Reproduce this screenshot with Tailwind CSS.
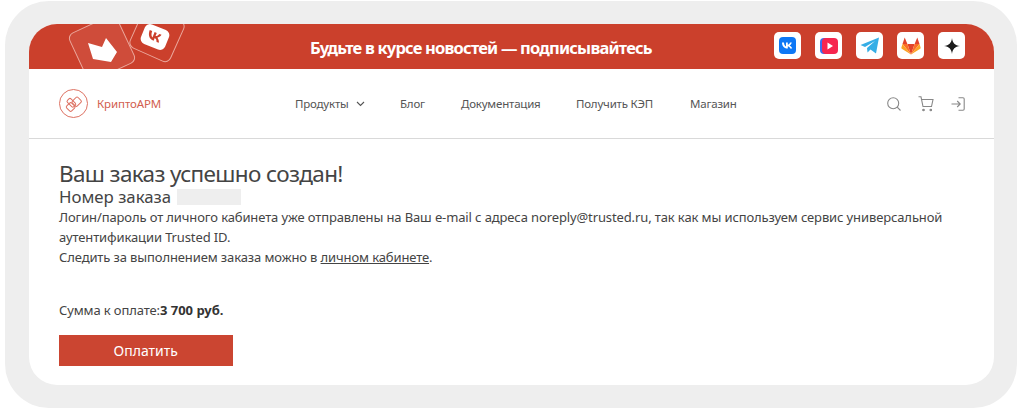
<!DOCTYPE html>
<html lang="ru">
<head>
<meta charset="utf-8">
<script src="https://cdn.jsdelivr.net/npm/@tailwindcss/browser@4"></script>
</head>
<body class="bg-white font-['Noto_Sans',sans-serif] overflow-hidden">
<div class="ml-[5px] mt-[1px] w-[1012px] h-[407px] rounded-[44px] bg-[#eeeeee] pl-[24px] pt-[23px]">
  <div class="w-[965px] h-[361px] rounded-[28px] bg-white overflow-hidden flex flex-col">
    <div class="relative h-[45px] bg-[#cb402c] flex items-start shrink-0 pt-[8px]">
      <svg class="absolute left-0 top-0" width="170" height="45" viewBox="0 0 170 45">
        <g transform="translate(128 10.5) rotate(24)"><rect x="-22" y="-22" width="44" height="44" rx="6" fill="#cb402c" stroke="#eba89d" stroke-width="1"/></g>
        <g transform="translate(73 24) rotate(-25)"><rect x="-26" y="-26" width="52" height="52" rx="6" fill="#cf4c3a" stroke="#eba89d" stroke-width="1"/></g>
        <path d="M59 19 L73 23 L77 14 L88 28 L82 38 L64 35 Z" fill="#fff"/>
        <g transform="translate(126 13) rotate(22)"><rect x="-13" y="-10.5" width="26" height="21" rx="5.5" fill="#fff"/><path transform="translate(-8.5 -6) scale(1.05)" d="M1 1.5 H3.5 C3.6 5 5 6.8 6 7 V1.5 H8.2 V4.6 C9.3 4.5 10.4 3.2 10.9 1.5 H13.1 C12.7 3.5 11.4 4.9 10.5 5.5 C11.4 6 12.9 7.2 13.6 9.5 H11.2 C10.7 7.9 9.5 6.7 8.2 6.6 V9.5 H7.7 C3.5 9.5 1.1 6.3 1 1.5Z" fill="#cb402c"/></g>
      </svg>
      <div class="absolute left-[281px] top-[12px] text-[16.5px] leading-[24px] font-bold text-white tracking-[-0.8px] whitespace-nowrap">Будьте в курсе новостей — подписывайтесь</div>
      <div class="ml-auto mr-[29px] flex gap-[14px]">
        <div class="w-[27px] h-[27px] rounded-[5px] bg-white flex items-center justify-center">
          <svg width="17" height="17" viewBox="0 0 17 17"><rect width="17" height="17" rx="4" fill="#0d77f5"/><path d="M3 5.5 H5 C5.1 8 6.2 9.2 7 9.4 V5.5 H8.8 V7.8 C9.7 7.7 10.6 6.8 11 5.5 H12.8 C12.5 7 11.4 8 10.6 8.5 C11.4 8.9 12.6 9.8 13.2 11.5 H11.2 C10.8 10.3 9.8 9.4 8.8 9.3 V11.5 H8.4 C5 11.5 3.1 9 3 5.5Z" fill="#fff"/></svg>
        </div>
        <div class="w-[27px] h-[27px] rounded-[5px] bg-white flex items-center justify-center">
          <svg width="18" height="18" viewBox="0 0 18 18"><rect x="0" y="1" width="12" height="16" rx="4" fill="#3a6ff0"/><rect x="2" y="1" width="16" height="16" rx="4" fill="#f6264f"/><path d="M7.5 5.5 L13 9 L7.5 12.5Z" fill="#fff"/></svg>
        </div>
        <div class="w-[27px] h-[27px] rounded-[5px] bg-white flex items-center justify-center">
          <svg width="20" height="17" viewBox="0 0 20 17"><path d="M0.5 8 L19 0.5 L16 16.5 L10.5 12.5 L7.5 15.5 L7 11 L15 4 L5 10Z" fill="#35aee6"/></svg>
        </div>
        <div class="w-[27px] h-[27px] rounded-[5px] bg-white flex items-center justify-center">
          <svg width="20" height="18" viewBox="0 0 20 18"><path d="M10 17.5 L13.6 7 H6.4Z" fill="#e2432a"/><path d="M10 17.5 L6.4 7 H1.5Z" fill="#fc6d26"/><path d="M10 17.5 L13.6 7 H18.5Z" fill="#fc6d26"/><path d="M1.5 7 L0.4 10.5 C0.3 11 0.5 11.4 0.8 11.7 L10 17.5Z" fill="#fca326"/><path d="M18.5 7 L19.6 10.5 C19.7 11 19.5 11.4 19.2 11.7 L10 17.5Z" fill="#fca326"/><path d="M1.5 7 L3.7 0.5 L6.4 7Z" fill="#e2432a"/><path d="M18.5 7 L16.3 0.5 L13.6 7Z" fill="#e2432a"/></svg>
        </div>
        <div class="w-[27px] h-[27px] rounded-[5px] bg-white flex items-center justify-center">
          <svg width="16" height="16" viewBox="0 0 16 16"><path d="M8 0 C8.5 5 11 7.5 16 8 C11 8.5 8.5 11 8 16 C7.5 11 5 8.5 0 8 C5 7.5 7.5 5 8 0Z" fill="#1c1c1c"/></svg>
        </div>
      </div>
    </div>
    <div class="relative h-[70px] border-b border-[#d9d9d9] flex items-center shrink-0 pl-[30px] pr-[29px]">
      <svg width="29" height="29" viewBox="0 0 29 29" fill="none" stroke="#dd7263" stroke-width="1"><circle cx="14.5" cy="14.5" r="14"/><g transform="rotate(-45 14.5 14.5)"><rect x="6.5" y="11.5" width="7" height="7" rx="1.5"/><rect x="11" y="8" width="5" height="9" rx="1.5"/><rect x="14" y="12" width="8" height="7" rx="1.5"/></g></svg>
      <span class="ml-[9px] text-[11.5px] tracking-[-0.1px] text-[#d2604f] whitespace-nowrap">КриптоАРМ</span>
      <nav class="absolute left-[266px] top-[26px] flex items-center text-[11.5px] tracking-[-0.2px] leading-[18px] text-[#555] whitespace-nowrap">
        <span class="flex items-center w-[105px]">Продукты<svg class="ml-[7px]" width="9" height="6" viewBox="0 0 9 6" fill="none" stroke="#555" stroke-width="1.1"><path d="M1 1 L4.5 4.5 L8 1"/></svg></span>
        <span class="w-[61px]">Блог</span>
        <span class="w-[115px]">Документация</span>
        <span class="w-[114px]">Получить КЭП</span>
        <span>Магазин</span>
      </nav>
      <div class="ml-auto flex items-center gap-[17px]">
        <svg width="14" height="14" viewBox="0 0 14 14" fill="none" stroke="#888" stroke-width="1.1"><circle cx="6.2" cy="6.2" r="5.5"/><path d="M10.2 10.2 L13.5 13.5"/></svg>
        <svg width="16" height="16" viewBox="0 0 16 16" fill="none" stroke="#888" stroke-width="1.1"><path d="M0.5 0.8 H3 L5 10.5 H13.5 L15 3.5 H3.6"/><circle cx="5.5" cy="14" r="0.8" fill="#888"/><circle cx="12.8" cy="14" r="0.8" fill="#888"/></svg>
        <svg width="14" height="14" viewBox="0 0 14 14" fill="none" stroke="#888" stroke-width="1.1"><path d="M7.5 0.8 H12 C12.8 0.8 13.2 1.2 13.2 2 V12 C13.2 12.8 12.8 13.2 12 13.2 H7.5"/><path d="M0.5 7 H9 M6.2 4 L9.2 7 L6.2 10"/></svg>
      </div>
    </div>
    <div class="pl-[30px] pr-[30px] text-[#444] flex-1 flex flex-col items-start">
      <h1 class="mt-[21px] text-[22.5px] tracking-[-0.64px] leading-[27px] whitespace-nowrap">Ваш заказ успешно создан!</h1>
      <div class="flex items-center text-[16.8px] leading-[20px] whitespace-nowrap"><span>Номер заказа</span><span class="ml-[6px] inline-block w-[64px] h-[16px] bg-[#eeeeee]"></span></div>
      <p class="text-[13px] tracking-[-0.118px] leading-[20px] w-[905px]">Логин/пароль от личного кабинета уже отправлены на Ваш e-mail с адреса noreply@trusted.ru, так как мы используем сервис универсальной аутентификации Trusted ID.<br>Следить за выполнением заказа можно в <a class="underline">личном кабинете</a>.</p>
      <p class="mt-[33px] text-[13px] tracking-[-0.118px] leading-[20px]">Сумма к оплате:<b class="text-[#333] tracking-normal">3 700 руб.</b></p>
      <button class="mt-[15px] w-[173.5px] h-[31px] bg-[#cb4531] text-white text-[14px] flex items-center justify-center">Оплатить</button>
    </div>
  </div>
</div>
</body>
</html>
